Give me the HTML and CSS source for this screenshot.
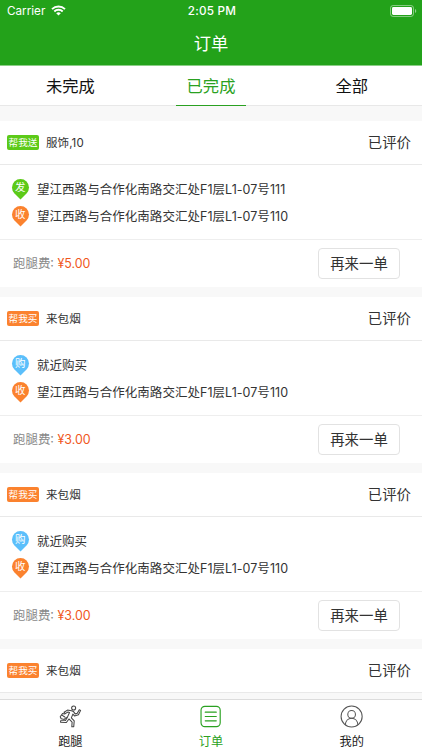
FILE: index.html
```html
<!DOCTYPE html>
<html lang="zh-CN">
<head>
    <meta charset="UTF-8">
    <meta name="viewport" content="width=device-width, initial-scale=1.0">
    <title>订单</title>
    <link rel="stylesheet" href="styles.css">
</head>
<body>
    <header class="header">
        <div class="status-bar">
            <div class="carrier">
                <span>Carrier</span>
                <svg width="15" height="11" viewBox="0 0 15 11" fill="none" stroke="#fff" stroke-width="1.9">
                    <path d="M1 4.1a9.3 9.3 0 0 1 13 0"/>
                    <path d="M3.3 6.5a6 6 0 0 1 8.4 0"/>
                    <path d="M7.5 10.6L5.2 8.3a3.3 3.3 0 0 1 4.6 0z" fill="#fff" stroke="none"/>
                </svg>
            </div>
            <div class="time">2:05 PM</div>
            <div class="battery">
                <svg width="27" height="12" viewBox="0 0 27 12">
                    <rect x="0.5" y="0.5" width="23" height="11" rx="2.6" fill="none" stroke="#fff" stroke-opacity="0.45"/>
                    <rect x="2" y="2" width="20" height="8" rx="1.4" fill="#fff"/>
                    <path d="M25 4v4a2.2 2.2 0 0 0 0-4z" fill="#fff" fill-opacity="0.5"/>
                </svg>
            </div>
        </div>
        <h1 class="title">订单</h1>
    </header>

    <nav class="tabs">
        <a class="tab"><span>未完成</span></a>
        <a class="tab active"><span>已完成</span></a>
        <a class="tab"><span>全部</span></a>
    </nav>

    <main class="orders">
        <section class="order">
            <div class="order-head">
                <span class="tag send">帮我送</span>
                <span class="goods">服饰,10</span>
                <span class="state">已评价</span>
            </div>
            <div class="order-body">
                <div class="address"><span class="pin green"><b>发</b></span>望江西路与合作化南路交汇处F1层L1-07号111</div>
                <div class="address"><span class="pin orange"><b>收</b></span>望江西路与合作化南路交汇处F1层L1-07号110</div>
            </div>
            <div class="order-foot">
                <span class="fee">跑腿费: <em>¥5.00</em></span>
                <button class="again">再来一单</button>
            </div>
        </section>

        <section class="order">
            <div class="order-head">
                <span class="tag buy">帮我买</span>
                <span class="goods">来包烟</span>
                <span class="state">已评价</span>
            </div>
            <div class="order-body">
                <div class="address"><span class="pin blue"><b>购</b></span>就近购买</div>
                <div class="address"><span class="pin orange"><b>收</b></span>望江西路与合作化南路交汇处F1层L1-07号110</div>
            </div>
            <div class="order-foot">
                <span class="fee">跑腿费: <em>¥3.00</em></span>
                <button class="again">再来一单</button>
            </div>
        </section>

        <section class="order">
            <div class="order-head">
                <span class="tag buy">帮我买</span>
                <span class="goods">来包烟</span>
                <span class="state">已评价</span>
            </div>
            <div class="order-body">
                <div class="address"><span class="pin blue"><b>购</b></span>就近购买</div>
                <div class="address"><span class="pin orange"><b>收</b></span>望江西路与合作化南路交汇处F1层L1-07号110</div>
            </div>
            <div class="order-foot">
                <span class="fee">跑腿费: <em>¥3.00</em></span>
                <button class="again">再来一单</button>
            </div>
        </section>

        <section class="order">
            <div class="order-head">
                <span class="tag buy">帮我买</span>
                <span class="goods">来包烟</span>
                <span class="state">已评价</span>
            </div>
        </section>
    </main>

    <footer class="tab-bar">
        <a class="bar-item">
            <svg width="24" height="24" viewBox="0 0 24 24" fill="none" stroke="#444" stroke-width="1.1" stroke-linejoin="round" stroke-linecap="round">
                <circle cx="15.8" cy="3.2" r="2.1"/>
                <path d="M13.5 6L9.400 5.300 5.800 7.600 7 9l2.900-1.700 1.600.5-2.300 5.100-2 3.300-5 .2v1.700l6 .1 2.700-3.600 3.300 3.200-.3 4.900h2l.5-6.100-3-3.200 1.600-3.900 1.700 1.900 4.100-1.200 2.300-4.600-1.400-.7-2.100 3.600-2.200.8-1.700-2.400z"/>
                <path d="M6.500 9.300l-2.300-.5-2.400 3.400 1 2.100 3.200.8 2.200-2.200M3.600 10.500l2.900 2"/>
            </svg>
            <span>跑腿</span>
        </a>
        <a class="bar-item active">
            <svg width="24" height="24" viewBox="0 0 24 24" fill="none" stroke="#2aa121" stroke-width="1.2" stroke-linecap="round">
                <rect x="1.6" y="1.4" width="20" height="21.2" rx="4"/>
                <path d="M6 7.5h11.5M6 12h11.5M6 16.5h11.5"/>
            </svg>
            <span>订单</span>
        </a>
        <a class="bar-item">
            <svg width="24" height="24" viewBox="0 0 24 24" fill="none" stroke="#555" stroke-width="1.1">
                <circle cx="11.6" cy="12" r="11"/>
                <circle cx="11.6" cy="9.8" r="4"/>
                <path d="M5 20.6c.3-4 3-6.8 6.6-6.8s6.3 2.8 6.6 6.8"/>
            </svg>
            <span>我的</span>
        </a>
    </footer>
</body>
</html>
```
FILE: styles.css
```css
* {
    box-sizing: border-box;
}
body {
    margin: 0;
    height: 750px;
    display: flex;
    flex-direction: column;
    overflow: hidden;
    background-color: #f8f8f8;
    color: #333;
    font-family: Inter, "Noto Sans CJK SC", sans-serif;
}
.header {
    flex: none;
    height: 66px;
    background-color: #23a21a;
    border-bottom: 1px solid #8bce86;
    color: #fff;
}
.status-bar {
    display: grid;
    grid-template-columns: 1fr 1fr 1fr;
    align-items: center;
    height: 22px;
    padding: 0 5px 0 7px;
    font-size: 11.7px;
}
.carrier {
    display: flex;
    align-items: center;
    gap: 6px;
}
.carrier svg {
    margin-top: -2px;
}
.time {
    text-align: center;
    font-weight: 500;
    letter-spacing: 0.25px;
}
.battery {
    display: flex;
    justify-content: flex-end;
}
.battery svg {
    margin-top: -1px;
}
.title {
    margin: 0;
    height: 43px;
    line-height: 43px;
    text-align: center;
    font-size: 17.3px;
    font-weight: 400;
}
.tabs {
    flex: none;
    display: flex;
    height: 40px;
    background-color: #fff;
    border-bottom: 1px solid #e8e8e8;
}
.tab {
    flex: 1;
    display: flex;
    justify-content: center;
    color: #111;
    font-size: 16.3px;
    line-height: 40px;
}
.tab span {
    width: 70px;
    height: 40px;
    text-align: center;
}
.tab.active span {
    color: #2aa121;
    border-bottom: 1px solid #2aa121;
}
.orders {
    flex: 1;
    min-height: 0;
    padding-top: 15px;
    overflow: hidden;
}
.order {
    margin-bottom: 10px;
    background-color: #fff;
}
.order-head {
    display: flex;
    align-items: center;
    height: 44px;
    padding: 0 11px 1px 7px;
    border-bottom: 1px solid #e9e9e9;
}
.tag {
    width: 32px;
    height: 15px;
    margin-top: 1px;
    border-radius: 2px;
    color: #fff;
    font-size: 9.6px;
    line-height: 15px;
    text-align: center;
    white-space: nowrap;
}
.tag.send {
    background-color: #5cca18;
}
.tag.buy {
    background-color: #fb822e;
}
.goods {
    margin-left: 7px;
    font-size: 11.5px;
    letter-spacing: 0.1px;
}
.state {
    margin: -2px 0 0 auto;
    font-size: 14.4px;
}
.order-body {
    height: 75px;
    padding: 10px 12px 0;
    border-bottom: 1px solid #eee;
}
.address {
    display: flex;
    align-items: center;
    height: 27px;
    font-size: 12.5px;
    letter-spacing: 0.04px;
}
.pin {
    display: flex;
    align-items: center;
    justify-content: center;
    width: 17px;
    height: 17px;
    margin: -3px 8px 0 0;
    border-radius: 50% 50% 0 50%;
    color: #fff;
    transform: rotate(45deg);
}
.pin b {
    font-size: 10.5px;
    line-height: 17px;
    font-weight: 400;
    transform: rotate(-45deg);
}
.pin.green {
    background-color: #5cca18;
}
.pin.orange {
    background-color: #fb822e;
}
.pin.blue {
    background-color: #5bbffb;
}
.order-foot {
    display: flex;
    align-items: center;
    justify-content: space-between;
    height: 47px;
    padding: 0 22px 0 13px;
}
.fee {
    margin-top: -2px;
    color: #888;
    font-size: 12.45px;
}
.fee em {
    color: #f0571c;
    font-style: normal;
}
.again {
    width: 82px;
    height: 31px;
    padding: 0 0 2px;
    border: 1px solid #e2e2e2;
    border-radius: 4px;
    background-color: #fff;
    color: #333;
    font-family: inherit;
    font-size: 14.4px;
}
.tab-bar {
    flex: none;
    display: flex;
    height: 51px;
    background-color: #fff;
    border-top: 1px solid #dcdcdc;
}
.bar-item {
    flex: 1;
    display: flex;
    flex-direction: column;
    align-items: center;
    padding-top: 5px;
    color: #222;
    font-size: 12.2px;
    line-height: 16px;
}
.bar-item svg {
    margin-bottom: 6px;
}
.bar-item.active {
    color: #2aa121;
}
```
